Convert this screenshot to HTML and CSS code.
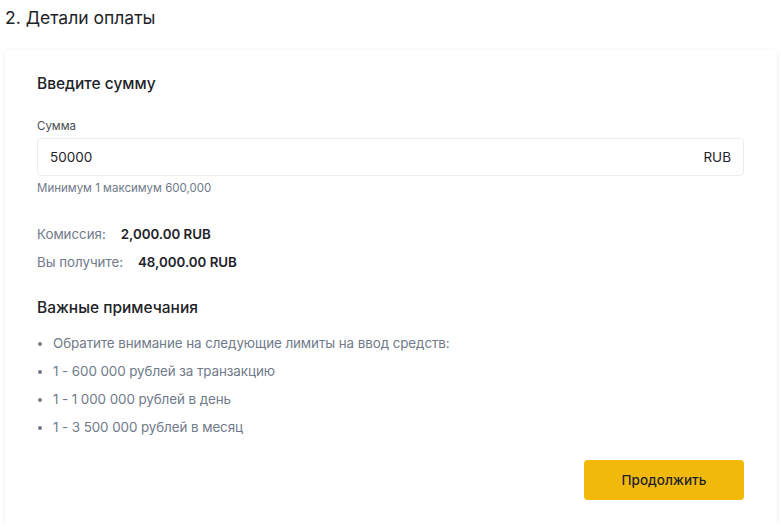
FILE: index.html
```html
<!DOCTYPE html>
<html lang="ru">
<head>
<meta charset="utf-8">
<link rel="stylesheet" href="styles.css">
</head>
<body>
<div class="page">
  <h2 class="title">2. Детали оплаты</h2>
  <div class="card">
    <h3 class="section">Введите сумму</h3>
    <div class="label">Сумма</div>
    <div class="input">
      <span class="value">50000</span>
      <span class="cur">RUB</span>
    </div>
    <div class="hint">Минимум 1 максимум 600,000</div>
    <div class="rows">
      <div class="row"><span class="k">Комиссия:</span><span class="v">2,000.00 RUB</span></div>
      <div class="row"><span class="k">Вы получите:</span><span class="v">48,000.00 RUB</span></div>
    </div>
    <h3 class="section notes">Важные примечания</h3>
    <ul class="list">
      <li>Обратите внимание на следующие лимиты на ввод средств:</li>
      <li>1 - 600 000 рублей за транзакцию</li>
      <li>1 - 1 000 000 рублей в день</li>
      <li>1 - 3 500 000 рублей в месяц</li>
    </ul>
    <div class="actions"><button class="btn">Продолжить</button></div>
  </div>
</div>
</body>
</html>
```
FILE: styles.css
```css
* { box-sizing: border-box; }
html, body { margin: 0; padding: 0; background: #fff; }
body { font-family: "Inter", "Roboto", sans-serif; color: #1e2329; }
.page { padding: 0 4px 0 5px; }
.title { margin: 0; padding-top: 7px; font-size: 17.5px; font-weight: 400; line-height: 22px; height: 50px; }
.card {
  background: #fff;
  border-radius: 4px;
  box-shadow: 0 1px 5px rgba(0,0,0,0.09);
  padding: 24px 33px 23px 32px;
}
.section { margin: 0; font-size: 15.5px; font-weight: 500; line-height: 20px; }
.label { margin-top: 24px; font-size: 11.5px; color: #474d57; line-height: 16px; }
.input {
  margin-top: 4px;
  height: 38px;
  border: 1px solid #eaecef;
  border-radius: 4px;
  display: flex;
  align-items: center;
  justify-content: space-between;
  padding: 0 12px;
  font-size: 13.5px;
}
.value { color: #1e2329; }
.cur { color: #1e2329; }
.hint { margin-top: 4px; font-size: 11.5px; color: #707a8a; line-height: 16px; }
.rows { margin-top: 30px; display: flex; flex-direction: column; gap: 12px; }
.row { font-size: 13.3px; line-height: 16px; }
.k { color: #707a8a; margin-right: 15px; }
.v { font-weight: 600; color: #1e2329; }
.notes { margin-top: 28px; }
.list { margin: 17px 0 0 0; padding: 0 0 0 16px; list-style: disc; color: #707a8a; font-size: 13.4px; letter-spacing: -0.08px; }
.list li { line-height: 16px; margin-bottom: 12px; padding-left: 0; }
.list li::marker { color: #707a8a; font-size: 12px; }
.actions { display: flex; justify-content: flex-end; margin-top: 25px; }
.btn {
  width: 160px; height: 40px;
  border: none; border-radius: 4px;
  background: #f0b90b;
  color: #1e2329;
  font-family: inherit;
  font-size: 13.5px;
  font-weight: 500;
}
```
